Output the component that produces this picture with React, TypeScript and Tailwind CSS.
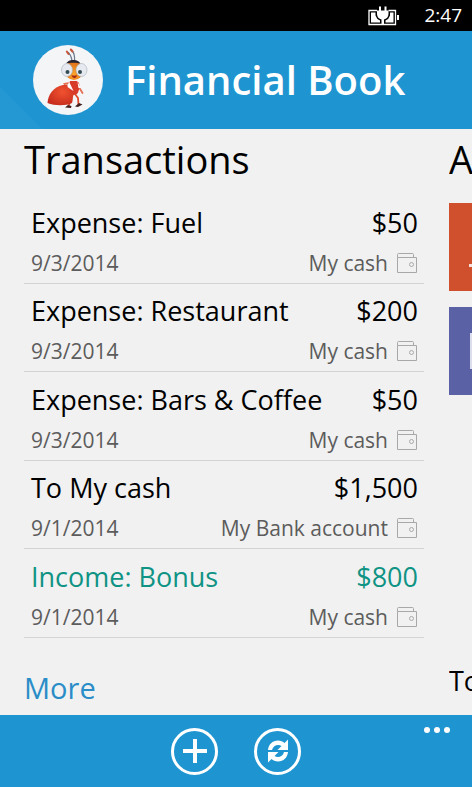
import React from 'react';

interface Transaction {
  title: string;
  amount: string;
  date: string;
  account: string;
  income?: boolean;
}

const TRANSACTIONS: Transaction[] = [
  { title: 'Expense: Fuel', amount: '$50', date: '9/3/2014', account: 'My cash' },
  { title: 'Expense: Restaurant', amount: '$200', date: '9/3/2014', account: 'My cash' },
  { title: 'Expense: Bars & Coffee', amount: '$50', date: '9/3/2014', account: 'My cash' },
  { title: 'To My cash', amount: '$1,500', date: '9/1/2014', account: 'My Bank account' },
  { title: 'Income: Bonus', amount: '$800', date: '9/1/2014', account: 'My cash', income: true },
];

const BatteryIcon = () => (
  <svg width="32" height="20" viewBox="0 0 32 20" aria-hidden="true">
    <path d="M9 4.500H1V18.500H27.500V4.500H20.500" fill="none" stroke="#fff" strokeWidth="1.300" />
    <path d="M3 6.500H7.500V9.500Q8.500 13 12 14.500V16.500H3ZM25.500 6.500H22V9.500Q21 13 17.500 14.500V16.500H25.500Z" fill="#fff" />
    <rect x="29" y="9" width="2" height="5" fill="#fff" />
    <path d="M11 0.500H13V4.500H16.500V0.500H18.500V4.500H20.500V8C20.500 11 18.500 13 16 13.500V18.500H13.500V13.500C11 13 9 11 9 8V4.500H11Z" fill="#fff" />
  </svg>
);

const AntLogo = () => (
  <svg viewBox="0 0 70 70" className="size-[70px]" role="img" aria-label="Financial Book">
    <defs>
      <radialGradient id="sack" cx="0.6" cy="0.35" r="0.75">
        <stop offset="0" stopColor="#f0522f" />
        <stop offset="1" stopColor="#c42a1c" />
      </radialGradient>
      <radialGradient id="face" cx="0.5" cy="0.7" r="0.7">
        <stop offset="0" stopColor="#fba52a" />
        <stop offset="1" stopColor="#dd6b16" />
      </radialGradient>
    </defs>
    <circle cx="35" cy="35" r="35" fill="#f4f5f7" />
    <g fill="none" strokeLinecap="round">
      <path d="M39 16C38.500 12 37.500 9 34.500 7M41.500 16C42 11 40.500 7 38.500 5" stroke="#6b7a8c" strokeWidth="1.300" />
      <path d="M35.500 9L33.800 6.500M39.500 6.500L37.800 4.500" stroke="#c8553a" strokeWidth="2" />
      <path d="M37 38L31.500 39L34 43M45 38L46.500 43L49.500 48" stroke="#e56f50" strokeWidth="1.800" />
      <path d="M40 49L38 55L35.500 61M42 49L45 53L45.500 60" stroke="#df4a2d" strokeWidth="1.800" />
    </g>
    <path d="M30 40C20 42 15 50 14.500 58C22 61 33 61 39 58C41 52 39 44 34 40Z" fill="url(#sack)" />
    <path d="M37 36C35 41 37 47 40 50L44 49C47 45 47 40 44 36Z" fill="#d93b2b" />
    <path d="M36 36.500L40.500 46L34.500 42ZM44.500 37L45.500 43L48 43Z" fill="#fff" />
    <ellipse cx="41" cy="25.500" rx="9" ry="9.500" fill="url(#face)" />
    <path d="M33 18.500C35 15.500 38 14.500 41 15C44 15 46 16.500 47.500 18.500C44 17.500 37 17.500 33 18.500Z" fill="#252330" />
    <ellipse cx="34" cy="25" rx="5.500" ry="6.500" fill="#e6eaf0" stroke="#a6adb8" strokeWidth="0.600" />
    <ellipse cx="48.500" cy="25" rx="5.500" ry="6.500" fill="#e6eaf0" stroke="#a6adb8" strokeWidth="0.600" />
    <circle cx="34.500" cy="27" r="2" fill="#354b53" />
    <circle cx="47" cy="27" r="2" fill="#354b53" />
    <path d="M38.500 30C40 31 42.500 31 44 30C43.500 34 39.500 34 38.500 30Z" fill="#a32318" />
    <path d="M32 62.500L35 60L38.500 61L38 63ZM42 61.500L46 58L49.500 59.500L45 62Z" fill="#44201d" />
  </svg>
);

const WalletIcon = () => (
  <svg width="22" height="22" viewBox="0 0 22 22" fill="none" stroke="#a8a8a8" aria-hidden="true">
    <path d="M1.500 5.500H20.500V20.500H1.500ZM1.500 5.500V2.500Q1.500 1.500 2.500 1.500H16.500Q17.500 1.500 17.500 2.500V5.500" />
    <circle cx="15.500" cy="12.500" r="2" />
  </svg>
);

const SyncIcon = () => (
  <svg width="24" height="24" viewBox="0 0 24 24" fill="#fff" aria-hidden="true">
    <path d="M2 11C2.500 5.500 6.500 1.500 12 1.500C14.500 1.500 17 2.500 18.500 4L22 0.500V11H11.500L15.500 7C12 4.500 7 6.500 6 11Z" />
    <path d="M22 13C21.500 18.500 17.500 22.500 12 22.500C9.500 22.500 7 21.500 5.500 20L2 23.500V13H12.500L8.500 17C12 19.500 17 17.500 18 13Z" />
  </svg>
);

const TransactionRow: React.FC<{ item: Transaction }> = ({ item }) => (
  <li className="flex flex-1 flex-col justify-end border-b border-[#d4d4d4] pl-[7px] pr-[6px] pb-1">
    <div className={`flex justify-between text-[27px] leading-[48px] ${item.income ? 'text-[#0f9384]' : 'text-black'}`}>
      <span>{item.title}</span>
      <span>{item.amount}</span>
    </div>
    <div className="flex justify-between text-[21px] leading-[32px] text-[#5c5c5c]">
      <span>{item.date}</span>
      <span className="flex items-center gap-2">
        {item.account}
        <WalletIcon />
      </span>
    </div>
  </li>
);

const App: React.FC = () => {
  return (
    <div className="flex min-h-screen flex-col overflow-hidden bg-[#f1f1f1] font-['Open_Sans','Noto_Sans',sans-serif]">
      <div className="flex h-[31px] items-center justify-end gap-6 bg-black pr-[10px] text-[19px] text-white">
        <BatteryIcon />
        <time>2:47</time>
      </div>

      <header className="relative flex h-[98px] items-center gap-[22px] bg-[#1e95d1] pl-[33px]">
        <svg className="absolute bottom-0 left-0" width="42" height="42" viewBox="0 0 42 42" aria-hidden="true">
          <path d="M0 0L42 42H0Z" fill="#2498d2" />
        </svg>
        <AntLogo />
        <h1 className="whitespace-nowrap text-[40px] leading-[48px] font-semibold text-white">Financial Book</h1>
      </header>

      <main className="flex flex-1 gap-[25px] pl-6">
        <section className="flex min-w-0 flex-1 flex-col">
          <h2 className="h-[66px] text-[38px] leading-[60px]">Transactions</h2>
          <ul className="flex flex-1 flex-col">
            {TRANSACTIONS.map((item, i) => (
              <TransactionRow key={i} item={item} />
            ))}
          </ul>
          <div className="h-[77px] pt-[30px]">
            <a href="#more" className="text-[29px] leading-[40px] text-[#2a8dc8]">More</a>
          </div>
        </section>

        {/* next panel, peeking in from the right */}
        <section className="flex w-[23px] flex-col overflow-hidden whitespace-nowrap">
          <h2 className="mb-[14px] text-[38px] leading-[60px]">A</h2>
          <div className="mb-4 flex h-[88px] items-end justify-end bg-[#d04f2d] pb-6">
            <span className="h-[3px] w-[3px] bg-[#f7e0da]" />
          </div>
          <div className="flex h-[88px] items-center justify-end bg-[#5b61a5]">
            <span className="h-9 w-[2px] bg-[#dcdeee]" />
          </div>
          <p className="mt-auto pb-[14px] text-[27px] leading-[40px]">To</p>
        </section>
      </main>

      <footer className="relative flex h-[72px] items-center justify-center gap-9 bg-[#1e95d1]">
        <button aria-label="Add" className="flex size-[47px] items-center justify-center rounded-full border-[3px] border-white">
          <svg width="24" height="24" viewBox="0 0 24 24" stroke="#fff" strokeWidth="4" aria-hidden="true">
            <path d="M12 0V24M0 12H24" />
          </svg>
        </button>
        <button aria-label="Sync" className="flex size-[47px] items-center justify-center rounded-full border-[3px] border-white">
          <SyncIcon />
        </button>
        <button aria-label="More options" className="absolute right-[22px] top-3 flex gap-1">
          <span className="size-[6px] rounded-full bg-white" />
          <span className="size-[6px] rounded-full bg-white" />
          <span className="size-[6px] rounded-full bg-white" />
        </button>
      </footer>
    </div>
  );
};

export default App;
